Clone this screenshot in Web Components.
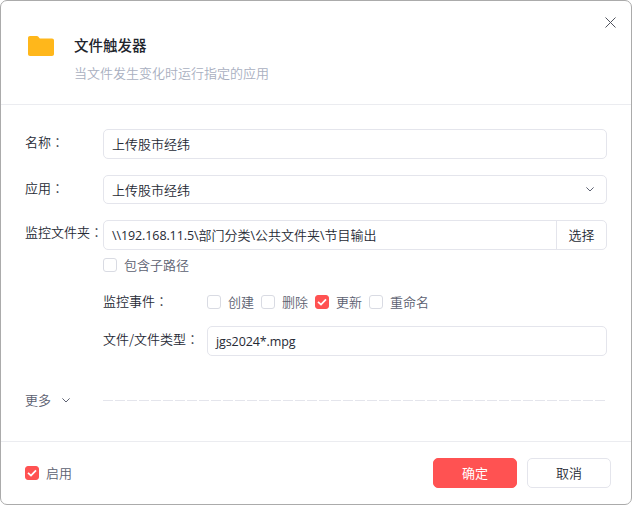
<!DOCTYPE html>
<html lang="zh-CN"><head><meta charset="utf-8"><title>文件触发器</title>
<style>
html,body{margin:0;padding:0;background:#fff}
body{font:350 13px/18px "Noto Sans CJK SC","Noto Sans",sans-serif;color:#262a35;width:632px;height:505px;overflow:hidden}
</style></head><body>
<trigger-dialog>
  <dialog-header slot="header" title-text="文件触发器" sub="当文件发生变化时运行指定的应用"></dialog-header>
  <form-row label="名称" style="--h:30px;--mb:16px"><text-field value="上传股市经纬"></text-field></form-row>
  <form-row label="应用" style="--h:29px;--mb:16px"><text-field value="上传股市经纬" dropdown></text-field></form-row>
  <form-row label="监控文件夹" style="--h:30px;--mb:7px;--ly:-1px"><text-field value="\\192.168.11.5\部门分类\公共文件夹\节目输出" action="选择"></text-field></form-row>
  <form-row style="--h:15px;--mb:22px"><check-box label="包含子路径"></check-box></form-row>
  <form-row style="--h:15px;--mb:17px">
    <sub-row label="监控事件" class="checks">
      <check-box label="创建"></check-box><check-box label="删除"></check-box><check-box label="更新" checked></check-box><check-box label="重命名"></check-box>
    </sub-row>
  </form-row>
  <form-row style="--h:30px;--mb:0px"><sub-row label="文件/文件类型"><text-field value="jgs2024*.mpg"></text-field></sub-row></form-row>
  <more-divider></more-divider>
  <check-box slot="footer-start" label="启用" checked></check-box>
  <app-button slot="footer-end" primary>确定</app-button>
  <app-button slot="footer-end">取消</app-button>
</trigger-dialog>
<script>
const shadow=(el,html)=>{el.attachShadow({mode:'open'}).innerHTML=html;};
const esc=s=>(s||'').replace(/&/g,'&amp;').replace(/</g,'&lt;');
const mixed=s=>esc(s).replace(/[\x21-\x7e]+/g,m=>`<span class="lat">${m}</span>`);
const colon='<span lang="zh-TW" style="font-family:\'Noto Sans CJK TC\',sans-serif">：</span>';
customElements.define('trigger-dialog',class extends HTMLElement{connectedCallback(){shadow(this,`<style>
:host{display:flex;flex-direction:column;box-sizing:border-box;width:632px;height:505px;background:#fff;border:1px solid #ababab;border-radius:7px;position:relative}
main{flex:none;height:336px;box-sizing:border-box;padding:24px 24px 0}
footer{flex:1;display:flex;align-items:center;justify-content:space-between;border-top:1px solid #ebecf0;padding:0 20px 0 24px}
.end{display:flex;gap:10px}
.close{position:absolute;right:15px;top:16px;width:11px;height:11px}
</style>
<slot name="header"></slot>
<svg class="close" viewBox="0 0 11 11" aria-hidden="true"><path d="M.5 .5 L10.5 10.5 M10.5 .5 L.5 10.5" stroke="#50545e" stroke-width="1" fill="none"/></svg>
<main><slot></slot></main>
<footer><slot name="footer-start"></slot><div class="end"><slot name="footer-end"></slot></div></footer>`)}});
customElements.define('dialog-header',class extends HTMLElement{connectedCallback(){shadow(this,`<style>
:host{display:flex;box-sizing:border-box;height:104px;border-bottom:1px solid #ebecf0;padding:32px 0 0 26px}
svg{width:28px;height:24px;margin-right:19px;margin-top:1px;flex:none}
h1{margin:0;font-size:14.5px;line-height:24px;font-weight:500;color:#22252d;}
p{margin:6px 0 0;font-size:13px;line-height:20px;font-weight:350;color:#a9afbf}
</style>
<svg viewBox="0 0 28 24" aria-hidden="true"><path d="M1 4 C1 2.8 1.8 2 3 2 H9.8 C10.5 2 11 2.3 11.4 2.8 L12.8 4.6 H25 C26.2 4.6 27 5.4 27 6.6 V20 C27 21.2 26.2 22 25 22 H3 C1.8 22 1 21.2 1 20 Z" fill="#ffb71b"/></svg>
<div><h1>${esc(this.getAttribute('title-text'))}</h1><p>${esc(this.getAttribute('sub'))}</p></div>`)}});
customElements.define('form-row',class extends HTMLElement{connectedCallback(){const l=this.getAttribute('label');shadow(this,`<style>
:host{display:flex;height:var(--h);margin-bottom:var(--mb);align-items:center}
.l{flex:none;width:78px;font-size:13px;white-space:nowrap;color:#262a35;align-self:flex-start;line-height:26px;margin-top:var(--ly,0)}
.c{flex:1;min-width:0;display:flex;align-items:center;height:100%}
::slotted(*){flex:1;min-width:0}
</style><div class="l">${l?esc(l)+colon:''}</div><div class="c"><slot></slot></div>`)}});
customElements.define('sub-row',class extends HTMLElement{connectedCallback(){shadow(this,`<style>
:host{display:flex;align-items:center;height:100%}
.l{flex:none;width:104px;white-space:nowrap;color:#262a35;line-height:18px}
:host(.checks) .l{margin-top:-1px}
.c{flex:1;min-width:0;display:flex;gap:7px;align-items:center;height:100%}
:host(:not(.checks)) .l{margin-top:-5px}
::slotted(text-field){flex:1}
</style><div class="l">${esc(this.getAttribute('label'))+colon}</div><div class="c"><slot></slot></div>`)}});
customElements.define('text-field',class extends HTMLElement{connectedCallback(){const a=this.getAttribute('action'),d=this.hasAttribute('dropdown');shadow(this,`<style>
:host{display:flex;box-sizing:border-box;height:100%;border:1px solid #e4e5ec;border-radius:5px;background:#fff;align-items:center;color:#262a35}
.v{flex:1;padding-left:8px;white-space:nowrap;overflow:hidden;line-height:28px}
.lat{font-family:"Open Sans",sans-serif;font-weight:400;font-size:12.5px;letter-spacing:-.1px}
.a{flex:none;width:50px;height:100%;border-left:1px solid #e4e5ec;display:flex;align-items:center;justify-content:center;box-sizing:border-box}
svg{width:8px;height:5px;margin-right:12px;flex:none;margin-top:-1px}
</style><div class="v">${mixed(this.getAttribute('value'))}</div>${a?`<div class="a">${esc(a)}</div>`:''}${d?`<svg viewBox="0 0 8 5" aria-hidden="true"><path d="M.4 .4 L4 4 L7.6 .4" stroke="#5d6272" stroke-width="1" fill="none"/></svg>`:''}`)}});
customElements.define('check-box',class extends HTMLElement{connectedCallback(){const c=this.hasAttribute('checked');shadow(this,`<style>
:host{display:inline-flex;flex:none!important;align-items:center;gap:7px;color:#5b6070;line-height:18px;height:15px}
.b{box-sizing:border-box;width:14px;height:14px;border:1px solid #d9dbe3;border-radius:3px;background:#fff;flex:none;display:flex;align-items:center;justify-content:center}
.b.on{background:#ff5252;border-color:#ff5252}
svg{width:10px;height:8px}
</style><span class="b ${c?'on':''}">${c?'<svg viewBox="0 0 10 8" aria-hidden="true"><path d="M1 3.8 L4 6.6 L9 1.4" stroke="#fff" stroke-width="1.8" fill="none"/></svg>':''}</span><span>${esc(this.getAttribute('label'))}</span>`)}});
customElements.define('more-divider',class extends HTMLElement{connectedCallback(){shadow(this,`<style>
:host{display:flex;align-items:center;margin-top:35px;height:18px;color:#5b6070}
.m{width:78px;flex:none;display:flex;align-items:center;gap:11px}
svg{width:8px;height:5px}
.d{flex:1;height:1px;background:repeating-linear-gradient(90deg,#e4e5ec 0 10px,transparent 10px 12px)}
</style><div class="m"><span>更多</span><svg viewBox="0 0 8 5" aria-hidden="true"><path d="M.4 .4 L4 4 L7.6 .4" stroke="#5d6272" stroke-width="1" fill="none"/></svg></div><div class="d"></div>`)}});
customElements.define('app-button',class extends HTMLElement{connectedCallback(){shadow(this,`<style>
:host{display:flex;box-sizing:border-box;width:84px;height:30px;border-radius:5px;border:1px solid #e4e5ec;background:#fff;align-items:center;justify-content:center;color:#262a35}
:host([primary]){background:#ff5252;border-color:#ff5252;color:#fff;font-weight:400}
</style><slot></slot>`)}});
</script></body></html>
